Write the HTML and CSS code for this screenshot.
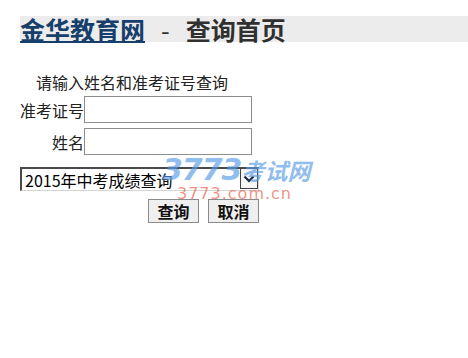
FILE: index.html
```html
<!DOCTYPE html>
<html lang="zh-CN">
<head>
  <meta charset="UTF-8" />
  <title>金华教育网 - 查询首页</title>
  <link rel="stylesheet" href="styles.css">
</head>
<body>
  <div class="page">
    <h2 class="title"><a href="#">金华教育网</a><span class="dash">-</span>查询首页</h2>

    <form class="query">
      <p class="prompt">请输入姓名和准考证号查询</p>
      <div class="row">
        <label for="zkzh">准考证号</label>
        <input id="zkzh" type="text" />
      </div>
      <div class="row row-name">
        <label for="xm">姓名</label>
        <input id="xm" type="text" />
      </div>
      <div class="select-wrap">
        <select class="kind">
          <option>2015年中考成绩查询</option>
        </select>
        <span class="arrow">
          <svg width="12" height="8" viewBox="0 0 12 8"><path d="M1.5 1.5 L6 6 L10.5 1.5" fill="none" stroke="#1b2a4a" stroke-width="2.2"/></svg>
        </span>
      </div>
      <div class="actions">
        <button type="submit">查询</button>
        <button type="reset">取消</button>
      </div>
    </form>

    <div class="watermark">
      <span class="wm-big"><i>3773</i>考试网</span>
      <span class="wm-small">3773.com.cn</span>
    </div>
  </div>
</body>
</html>
```

FILE: styles.css
```css
body {
  margin: 0;
  padding: 0;
  background-color: #fff;
  font-family: "Noto Sans CJK SC", "Noto Sans", sans-serif;
  color: #111;
}

.page {
  position: relative;
  padding-left: 20px;
  padding-top: 16px;
}

.title {
  margin: 0;
  height: 26px;
  line-height: 26px;
  background-color: #ececec;
  font-size: 25px;
  font-weight: bold;
  color: #303030;
}

.title a {
  color: #163f6c;
  text-decoration: underline;
  text-decoration-thickness: 2px;
  text-underline-offset: 1px;
}

.dash {
  display: inline-block;
  margin: 0 16px;
  font-weight: normal;
}

.query {
  width: 240px;
}

.prompt {
  margin: 30px 0 0 16px;
  font-size: 16px;
  line-height: 20px;
  color: #222;
}

.row {
  display: flex;
  align-items: center;
  margin-top: 4px;
}

.row-name {
  margin-top: 5px;
}

.row label {
  width: 64px;
  text-align: right;
  font-size: 16px;
  color: #222;
}

.row input {
  width: 168px;
  height: 27px;
  box-sizing: border-box;
  border: 1px solid #8c8c8c;
  margin: 0;
  padding: 2px 4px;
  font-size: 14px;
}

.select-wrap {
  position: relative;
  margin-top: 12px;
  width: 239px;
  height: 24px;
}

.kind {
  appearance: none;
  -webkit-appearance: none;
  width: 239px;
  height: 24px;
  box-sizing: border-box;
  margin: 0;
  padding: 0 0 0 3px;
  border-top: 2px solid #4a4a4a;
  border-left: 2px solid #4a4a4a;
  border-right: 1px solid #d4d4d4;
  border-bottom: 1px solid #d4d4d4;
  border-radius: 0;
  background: #fff;
  font-family: "Noto Sans CJK SC", "Noto Sans", sans-serif;
  font-size: 16px;
  line-height: 20px;
  color: #000;
}

.arrow {
  position: absolute;
  top: 1px;
  right: 1px;
  width: 18px;
  height: 21px;
  box-sizing: border-box;
  border: 1px solid #444;
  background: #f6f6f6;
  display: flex;
  align-items: center;
  justify-content: center;
}

.actions {
  display: flex;
  justify-content: flex-end;
  gap: 9px;
  margin-top: 8px;
  width: 239px;
}

.actions button {
  width: 51px;
  height: 24px;
  box-sizing: border-box;
  margin: 0;
  padding: 0;
  border: 1px solid #8a8a8a;
  border-radius: 0;
  background-color: #efefef;
  font-family: "Noto Sans CJK SC", "Noto Sans", sans-serif;
  font-size: 16px;
  font-weight: bold;
  line-height: 20px;
  color: #111;
}

.watermark {
  position: absolute;
  left: 162px;
  top: 153px;
  pointer-events: none;
  display: flex;
  flex-direction: column;
}

.wm-big {
  font-size: 23px;
  font-weight: bold;
  font-style: italic;
  line-height: 34px;
  color: rgba(88, 156, 232, 0.68);
}

.wm-big i {
  font-family: "DejaVu Sans", sans-serif;
  font-size: 30px;
  letter-spacing: -1px;
}

.wm-small {
  margin-left: 15px;
  margin-top: -1px;
  font-family: "DejaVu Sans", sans-serif;
  font-size: 16px;
  line-height: 16px;
  letter-spacing: 1px;
  color: rgba(238, 108, 92, 0.75);
}
```
